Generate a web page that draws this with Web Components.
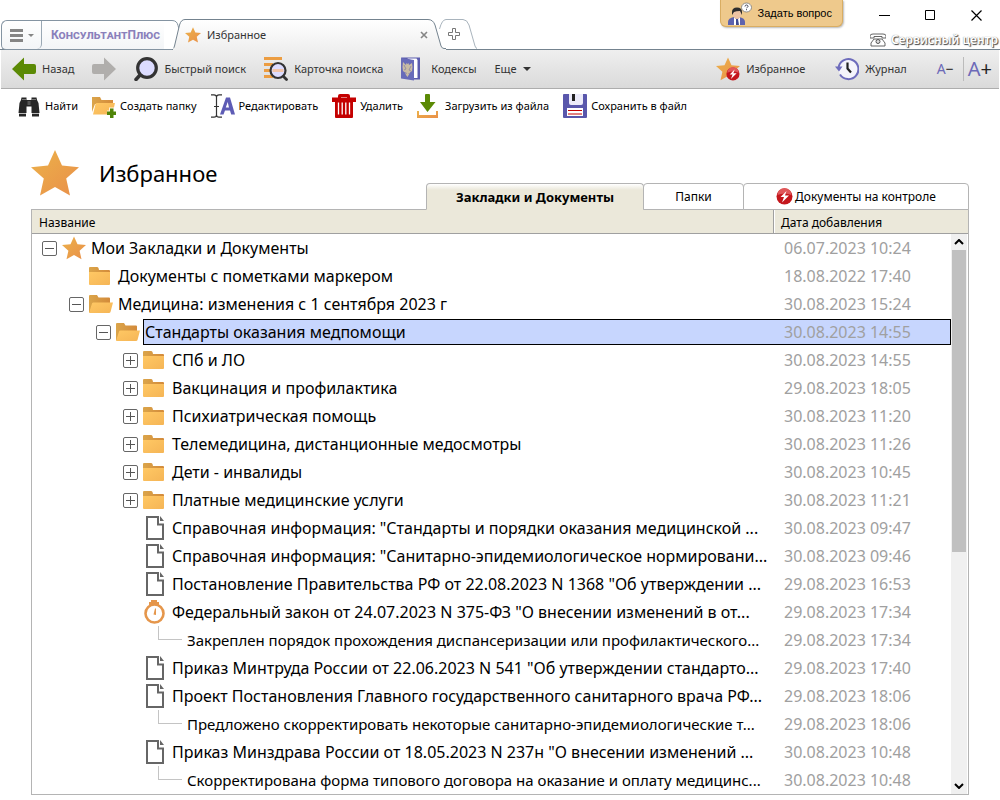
<!doctype html>
<html lang="ru">
<head>
  <meta charset="utf-8">
  <meta name="viewport" content="width=device-width, initial-scale=1.0">
  <title>КонсультантПлюс - Избранное</title>
  <style>
    body {
      margin: 0;
      background: #fff;
      color: #000;
      font: 12px/16px "Noto Sans", "Open Sans", sans-serif;
    }
  </style>

  <template id="tool-button">
    <style>
      :host { display: block; }
      button {
        display: flex;
        align-items: center;
        gap: var(--tool-gap, 6px);
        height: 28px;
        margin: 0;
        padding: 0;
        border: 0;
        background: none;
        color: inherit;
        font: inherit;
        font-size: 11px;
        white-space: nowrap;
      }
    </style>
    <button type="button"><slot name="icon"></slot><slot></slot></button>
  </template>

  <template id="window-tabs">
    <style>
      :host { display: flex; align-items: flex-end; height: 31px; margin-bottom: -1px; padding-left: 1px; }
      button { margin: 0; padding: 0; border: 0; background: none; font: inherit; color: inherit; }
      .start, .page { display: flex; align-items: center; height: 30px; box-sizing: border-box; }
      .start {
        border: 1px solid #8494a2;
        border-right: 0;
        border-radius: 6px 0 0 5px;
        background: linear-gradient(#fff, #f3f5f7);
      }
      .menu {
        display: flex;
        align-items: center;
        justify-content: center;
        gap: 5px;
        width: 40px;
        height: 28px;
        border-right: 1px solid #9aa8b4;
        border-radius: 0 0 5px 0;
      }
      .logo {
        padding: 0 0 0 9px;
        width: 122px;
        text-align: left;
        box-sizing: border-box;
        color: #8a80bb;
        font: bold 12px/28px Roboto, "Liberation Sans", sans-serif;
        font-variant: small-caps;
        white-space: nowrap;
      }
      svg { display: block; flex: none; }
      .page { align-self: flex-end; height: 31px; margin-left: -7px; }
      .mid {
        display: flex;
        align-items: center;
        gap: 6px;
        width: 243px;
        height: 31px;
        box-sizing: border-box;
        border-top: 1px solid #74838f;
        background: linear-gradient(#fff, #efefef);
      }
      .mid span { flex: 1; color: #333; font-size: 11px; }
      .edge-end { margin-right: -7px; }
    </style>
    <div class="start">
      <button class="menu" type="button" aria-label="Меню">
        <svg width="13" height="13" viewBox="0 0 13 13"><path d="M0 0h13v3H0zM0 5h13v3H0zM0 10h13v3H0z" fill="#858585"/></svg>
        <svg width="6" height="3" viewBox="0 0 6 3"><path d="M0 0h6L3 3z" fill="#858585"/></svg>
      </button>
      <button class="logo" type="button">КонсультантПлюс</button>
    </div>
    <svg width="16" height="30" viewBox="0 0 16 30" fill="none" stroke="#8494a2">
      <path d="M0 .5h8q5 0 6 5L16 12" fill="none"/><path d="M0 29.5h8"/>
    </svg>
    <div class="page">
      <svg width="12" height="31" viewBox="0 0 12 31">
        <linearGradient id="g" x2="0" y2="1"><stop stop-color="#fff"/><stop offset="1" stop-color="#efefef"/></linearGradient>
        <path d="M0 31v-1.500q1-.5 1.500-2.500L6.500 6Q8 .5 12 .5V31z" fill="url(#g)"/>
        <path d="M0 29.500q1-.5 1.500-2.500L6.500 6Q8 .5 12 .5" fill="none" stroke="#74838f"/>
      </svg>
      <div class="mid">
        <ui-icon name="star" style="--size:16px"></ui-icon>
        <span>Избранное</span>
        <button type="button" aria-label="Закрыть вкладку">
          <svg width="8" height="8" viewBox="0 0 8 8"><path d="M1 1l6 6M7 1L1 7" stroke="#858585" stroke-width="1.600"/></svg>
        </button>
      </div>
      <svg class="edge-end" width="18" height="31" viewBox="0 0 18 31">
        <linearGradient id="h" x2="0" y2="1"><stop stop-color="#fff"/><stop offset="1" stop-color="#efefef"/></linearGradient>
        <path d="M0 .5q5 0 7 5.500l6 21q1 2.500 3 2.500h2V31H0z" fill="url(#h)"/>
        <path d="M0 .5q5 0 7 5.500l6 21q1 2.500 3 2.500h2" fill="none" stroke="#74838f"/>
      </svg>
    </div>
    <button type="button" aria-label="Новая вкладка">
      <svg width="38" height="31" viewBox="0 0 38 31" fill="none" stroke="#a9b4bd">
        <path d="M.5 10Q3 .5 7 .5h17q4 0 6 5.500l6 21q1 2.500 2 2.500"/>
        <path d="M13.500 9.500h3v4h4v3h-4v4h-3v-4h-4v-3h4z" stroke="#777"/>
      </svg>
    </button>
  </template>

  <template id="title-bar">
    <style>
      :host {
        display: flex;
        justify-content: space-between;
        align-items: flex-end;
        height: 49px;
        border-bottom: 1px solid #74838f;
      }
      .side { display: flex; flex-direction: column; align-items: flex-end; height: 49px; }
      .top { display: flex; height: 30px; align-items: flex-start; }
      button { margin: 0; padding: 0; border: 0; background: none; font: inherit; color: inherit; }
      .ask {
        display: flex;
        align-items: center;
        gap: 6px;
        height: 27px;
        padding: 0 10px 0 7px;
        margin-right: 18px;
        border: 1px solid #d9ad62;
        border-top: 0;
        border-radius: 0 0 6px 6px;
        background: #eec98c;
        box-shadow: 1px 1px 2px #b9b9b9;
        white-space: nowrap;
        font: 11px/16px "Liberation Sans", sans-serif;
      }
      .controls { display: flex; margin-right: 1px; }
      .controls button { display: grid; place-items: center; width: 46px; height: 30px; }
      a {
        display: flex;
        align-items: center;
        gap: 5px;
        height: 19px;
        color: #fff;
        font: 600 12px/18px "Noto Sans", sans-serif;
        text-decoration: none;
        text-shadow: 1px 1px 1px #444, 0 0 1px #777;
        white-space: nowrap;
        padding-right: 2px;
      }
    </style>
    <window-tabs></window-tabs>
    <div class="side">
      <div class="top">
        <button class="ask" type="button"><ui-icon name="person"></ui-icon>Задать вопрос</button>
        <div class="controls">
          <button type="button" aria-label="Свернуть"><svg width="11" height="11"><path d="M0 5.500h11" stroke="#000"/></svg></button>
          <button type="button" aria-label="Развернуть"><svg width="11" height="11"><path d="M.5 .5h9v9h-9z" fill="none" stroke="#000"/></svg></button>
          <button type="button" aria-label="Закрыть"><svg width="11" height="11"><path d="M.5 .5l10 10M10.500 .5l-10 10" stroke="#000" stroke-width="1.200"/></svg></button>
        </div>
      </div>
      <a href="#service"><ui-icon name="phone" style="--size:16px"></ui-icon>Сервисный центр</a>
    </div>
  </template>

  <template id="nav-bar">
    <style>
      :host {
        display: flex;
        align-items: center;
        gap: 18px;
        height: 38px;
        padding: 0 7px 0 11px;
        margin: 0 1px;
        border-bottom: 1px solid #adadad;
        background: linear-gradient(#efefef, #dadada);
        color: #333;
      }
      .right { display: flex; align-items: center; gap: 30px; margin-left: auto; }
      .sizes { display: flex; align-items: center; }
      .sizes button { margin: 0; padding: 0 9px 0 0; border: 0; background: none; color: #222; font: 14px/24px "Noto Sans", sans-serif; }
      .sizes button + button { padding: 0 0 0 4px; border-left: 1px solid #bbb; font-size: 20px; }
      .sizes b { color: #6d6ab8; font-weight: normal; }
      .down { display: inline-block; margin-left: 6px; vertical-align: middle; }
    </style>
    <tool-button><ui-icon slot="icon" name="back"></ui-icon>Назад</tool-button>
    <tool-button style="--tool-gap:0px"><ui-icon slot="icon" name="forward"></ui-icon></tool-button>
    <tool-button><ui-icon slot="icon" name="search"></ui-icon>Быстрый поиск</tool-button>
    <tool-button><ui-icon slot="icon" name="card"></ui-icon>Карточка поиска</tool-button>
    <tool-button><ui-icon slot="icon" name="book"></ui-icon>Кодексы</tool-button>
    <tool-button style="--tool-gap:0px">Еще<svg class="down" width="8" height="4" viewBox="0 0 8 4"><path d="M0 0h8L4 4z" fill="#333"/></svg></tool-button>
    <div class="right">
      <tool-button><ui-icon slot="icon" name="star-control"></ui-icon>Избранное</tool-button>
      <tool-button><ui-icon slot="icon" name="journal"></ui-icon>Журнал</tool-button>
      <div class="sizes">
        <button type="button"><b>A</b>−</button>
        <button type="button"><b>A</b>+</button>
      </div>
    </div>
  </template>

  <template id="action-bar">
    <style>
      :host { display: flex; align-items: center; gap: 14px; height: 34px; padding-left: 17px; --tool-gap: 4px; }
    </style>
    <tool-button><ui-icon slot="icon" name="find"></ui-icon>Найти</tool-button>
    <tool-button><ui-icon slot="icon" name="folder-add"></ui-icon>Создать папку</tool-button>
    <tool-button><ui-icon slot="icon" name="edit"></ui-icon>Редактировать</tool-button>
    <tool-button><ui-icon slot="icon" name="trash"></ui-icon>Удалить</tool-button>
    <tool-button><ui-icon slot="icon" name="download"></ui-icon>Загрузить из файла</tool-button>
    <tool-button><ui-icon slot="icon" name="save"></ui-icon>Сохранить в файл</tool-button>
  </template>

  <template id="page-heading">
    <style>
      :host { display: flex; justify-content: space-between; align-items: flex-end; margin: 0 31px; height: 86px; }
      h1 { display: flex; align-items: center; gap: 20px; align-self: flex-start; margin: 24px 0 0; font: 22px/52px "Noto Sans", sans-serif; }
    </style>
    <h1><ui-icon name="star" style="--size:48px"></ui-icon><slot></slot></h1>
    <slot name="tabs"></slot>
  </template>

  <template id="view-tabs">
    <style>
      :host { display: flex; margin-bottom: -1px; position: relative; }
      button {
        display: flex;
        align-items: center;
        justify-content: center;
        gap: 2px;
        width: 101px;
        height: 27px;
        margin: 0 0 0 -1px;
        padding: 0;
        border: 1px solid #b4b4b4;
        border-radius: 4px 4px 0 0;
        background: #fff;
        color: #000;
        font: inherit;
        white-space: nowrap;
      }
      .active { width: 218px; border-bottom-color: #ebe8da; background: linear-gradient(#fff, #ebe8da 6px); font-weight: bold; font-size: 13px; }
      .control { width: 226px; }
    </style>
    <button class="active" type="button">Закладки и Документы</button>
    <button type="button">Папки</button>
    <button class="control" type="button"><ui-icon name="control" style="--size:17px"></ui-icon>Документы на контроле</button>
  </template>

  <template id="bookmark-tree">
    <style>
      :host { display: grid; margin: 0 31px; border: 1px solid #b4b4b4; }
      table {
        grid-area: 1 / 1;
        width: 100%;
        border-collapse: separate;
        border-spacing: 0;
        table-layout: fixed;
      }
      th {
        height: 24px;
        padding: 2px 7px 0;
        box-sizing: border-box;
        border-bottom: 1px solid #a0a0a0;
        background: #ebe8da;
        text-align: left;
        font-weight: normal;
        line-height: 21px;
      }
      th + th { width: 195px; border-left: 1px solid #a0a0a0; box-shadow: inset 1px 0 #fff; }
      td { height: 28px; padding: 0; font-size: 16px; line-height: 24px; white-space: nowrap; }
      .name { display: flex; align-items: center; height: 28px; padding-left: calc(10px + 27px * var(--level)); }
      .toggle {
        display: grid;
        place-items: center;
        flex: none;
        width: 15px;
        height: 15px;
        margin: 0 5px 0 0;
        padding: 0;
        border: 1px solid #666;
        border-radius: 2px;
        background: #fff;
      }
      .toggle.none { visibility: hidden; }
      .label {
        flex: 1;
        min-width: 0;
        height: 24px;
        margin-left: 3px;
        padding-left: 1px;
        border: 1px solid transparent;
        border-right: 0;
        overflow: hidden;
      }
      .date { color: #a0a0a0; }
      .date span { display: block; height: 24px; margin-right: 17px; padding-left: 11px; border: 1px solid transparent; border-left: 0; }
      .selected span { border-color: #000; background: #c7d6fe; }
      .note .name { padding-left: 126px; font-size: 15px; }
      .note .elbow { flex: none; width: 24px; height: 14px; margin-bottom: 14px; border: solid #c4c4c4; border-width: 0 0 1px 1px; box-sizing: border-box; }
      .scroll {
        grid-area: 1 / 1;
        z-index: 1;
        justify-self: end;
        display: flex;
        flex-direction: column;
        justify-content: space-between;
        width: 17px;
        margin-top: 24px;
        box-sizing: border-box;
        border-right: 1px solid #fff;
        background: #f0f0f0;
      }
      .scroll button { display: grid; place-items: center; width: 16px; height: 16px; padding: 0; border: 0; background: none; }
      .thumb { flex: 0 0 54%; margin: 0 1px; background: #c0c0c0; }
      .rest { flex: 1; }
    </style>
    <table>
      <thead><tr><th scope="col">Название</th><th scope="col">Дата добавления</th></tr></thead>
      <tbody></tbody>
    </table>
    <div class="scroll">
      <button type="button" aria-label="Вверх"><svg width="10" height="6"><path d="M1 5l4-4 4 4" fill="none" stroke="#000" stroke-width="2"/></svg></button>
      <div class="thumb"></div>
      <div class="rest"></div>
      <button type="button" aria-label="Вниз"><svg width="10" height="6"><path d="M1 1l4 4 4-4" fill="none" stroke="#000" stroke-width="2"/></svg></button>
    </div>
  </template>
</head>
<body>
<title-bar></title-bar>
<nav-bar></nav-bar>
<action-bar></action-bar>
<page-heading>Избранное<view-tabs slot="tabs"></view-tabs></page-heading>
<bookmark-tree></bookmark-tree>

<script>
  const ORANGE = '<linearGradient id="o" x2="1" y2="1"><stop stop-color="#ecb24a"/><stop offset="1" stop-color="#e98f49"/></linearGradient>';
  const FOLDER = '<linearGradient id="f" x2="1" y2="1"><stop stop-color="#ffc864"/><stop offset="1" stop-color="#f5b556"/></linearGradient>' +
    '<linearGradient id="d" x2="1" y2="0"><stop stop-color="#dba54a"/><stop offset="1" stop-color="#d38a3a"/></linearGradient>';
  const BOLT = '<circle cx="8.500" cy="8.500" r="8" fill="#c4161c"/><path d="M1.500 7a7 7 0 0 1 14 0q-7-3-14 0z" fill="#e0575a"/>' +
    '<path d="M10.500 3L4.500 9h3.500l-2 5.500L13 7.500H9z" fill="#fff"/>';

  // all glyphs are drawn on a 24x24 grid unless a viewBox is given
  const ICONS = {
    'star': ['0 0 24 24', ORANGE + '<path d="M12 .5l3.500 7.700 8.500.9-6.400 5.700 1.900 8.400L12 19l-7.500 4.200 1.900-8.400L0 9.100l8.500-.9z" fill="url(#o)"/>'],
    'star-control': ['0 0 24 24', ORANGE + '<path d="M12 .5l3.500 7.700 8.500.9-6.400 5.700 1.900 8.400L12 19l-7.500 4.200 1.900-8.400L0 9.100l8.500-.9z" fill="url(#o)"/><g transform="translate(10 10) scale(.82)">' + BOLT + '</g>'],
    'control': ['0 0 17 17', BOLT],
    'back': ['0 0 24 24', '<path d="M0 12L12 .5V7h10q2 0 2 2v6q0 2-2 2H12v6.500z" fill="#5b8a05"/>'],
    'forward': ['0 0 24 24', '<path d="M24 12L12 .5V7H2Q0 7 0 9v6q0 2 2 2h10v6.500z" fill="#b0aeac"/>'],
    'search': ['0 0 24 24', '<path d="M6.500 17.500L2 22.500" stroke="#333" stroke-width="3.500" stroke-linecap="round"/><circle cx="13" cy="11" r="9.300" fill="#dcdcff" stroke="#333" stroke-width="3.200"/>'],
    'card': ['0 0 24 24', '<path d="M0 0h18v3H0zM0 6h9v3H0zM0 12h7v3H0zM0 18h9v3H0z" fill="#ec9d42"/><circle cx="14" cy="13.500" r="7.500" fill="#dcdcff" stroke="#333" stroke-width="2.200"/><path d="M8.500 12h11v3h-11z" fill="#f2c5aa"/><path d="M19.500 19.500l3 3" stroke="#333" stroke-width="2.800" stroke-linecap="round"/>'],
    'book': ['3 0 24 24', '<path d="M3 .5h19v22h-8z" fill="#5b5cae"/><path d="M9 1.500h9.500L19.500 3v18h-4V4z" fill="#fff"/><path d="M3 1l13 2v20.500L3 21.500z" fill="#686bb9"/><path d="M8.500 6l1 1 1-1 .5 2 3-2 .5 4-.5 4-2 1.500-1 2-1.500 2.500L8 18l-1-2.500-2-1.500-.5-4L5 5l3 3z" fill="#c9bca5"/><path d="M6 8l2 4-2 1M13 9l-2 4 2 1M7.500 15l1 2M11.500 16l-1 1" stroke="#8a83a6" stroke-width=".8" fill="none"/>'],
    'journal': ['0 0 24 24', '<circle cx="13" cy="12" r="9.500" fill="#f5f4fb"/><path d="M5 17.500A10 10 0 1 0 3.500 11" fill="none" stroke="#6e6cbc" stroke-width="2"/><path d="M0 9.500h7.500L4 14.500z" fill="#6e6cbc"/><path d="M12.500 5.500v6l3.500 4" fill="none" stroke="#222" stroke-width="2.200"/>'],
    'find': ['0 0 24 24', '<path d="M4.500 3.500h5V6h5V3.500h5L20 6l1.500 3 1 10h-8v-6.500h-5V19h-8l1-10L4 6zM2 20h7v2.500H2zM15 20h7v2.500h-7z" fill="#262626"/><path d="M5 5.500h4M15 5.500h4M2 19.500h7M15 19.500h7" stroke="#999" stroke-width=".7"/><path d="M10.500 7h3v4h-3z" fill="#555"/>'],
    'folder-add': ['0 0 24 24', FOLDER + '<path d="M0 3h8l1.500 3H21v4H3L0 18z" fill="url(#d)"/><path d="M4.500 9H23l-2.500 10.500q-.3 1-1.500 1H1L3.500 10z" fill="url(#f)"/><path d="M17 13.500h5.500v3H24V24h-9v-7.500h2z" fill="#fff" opacity=".8"/><path d="M18 14.500h3.500v3H24V21h-2.500v3H18v-3h-3v-3.500h3z" fill="#4f8408"/>'],
    'edit': ['0 0 24 24', '<path d="M0 .8h3q2.500 0 2.500 2.200v18q0 2.200-2.500 2.200H0M11 .8H8Q5.500.8 5.500 3v18q0 2.200 2.500 2.200h3M3 12.500h5" fill="none" stroke="#333" stroke-width="1.200"/><path d="M9 20.500L15 3.500h4l5 17h-3.800l-1.200-4h-5l-1.500 4zM14.800 13.500H18L16.700 8z" fill="#5e5cb5" fill-rule="evenodd"/>'],
    'trash': ['0 0 24 24', '<path d="M6 3.500V2q0-2 2-2h8q2 0 2 2v1.500h6V8H0V3.500zM9 3.500h6V3H9zM3 8h18v15q0 1-1 1H4q-1 0-1-1z" fill="#c40000" fill-rule="evenodd"/><path d="M6.500 8.500v12M10.200 8.500v12M13.800 8.500v12M17.500 8.500v12" stroke="#fff" stroke-width="1.300"/>'],
    'download': ['0 0 24 24', ORANGE + '<path d="M0 17h2v4h17v-4h2v7H0z" fill="url(#o)"/><path d="M8 1q0-1 1-1h3q1 0 1 1v7h5.500l-8 10L3 8h5z" fill="#5b8a05"/>'],
    'save': ['0 0 24 24', '<path d="M0 1q0-1 1-1h22q1 0 1 1v22q0 1-1 1H1q-1 0-1-1z" fill="#5957ac"/><path d="M6 0h14v9q0 2-2 2H8q-2 0-2-2z" fill="#ecebfa"/><path d="M9 0h3v7H9z" fill="#222"/><path d="M4 14h16v8H4z" fill="#fff"/><path d="M5 16.500h14M5 20h14" stroke="#c40000"/>'],
    'person': ['0 0 24 24', '<path d="M0 24v-3q0-4 6-5h5q6 1 6 5v3z" fill="#5e63ae"/><path d="M6 16l3 3 3-3v8H6z" fill="#fff"/><path d="M8 18h2l1 6H8z" fill="#3f4b91"/><path d="M5 11q0-4 4-4t4 4v3q-1 4-4 4t-4-4z" fill="#efc4a3"/><path d="M4 14v-3q0-4.500 5-4.500t5 4.500v3l-2-4q-4 0-6 1z" fill="#2d2d2d"/><ellipse cx="18.500" cy="6.500" rx="5" ry="4.500" fill="#fff" stroke="#777" stroke-width=".8"/><path d="M17 5.500q0-1.500 1.500-1.500T20 5.500q-.5 1-1.500 1.500M18.500 8.200v1" fill="none" stroke="#445"/>'],
    'phone': ['0 0 16 16', '<path d="M0 4q0-2 3-2h10q3 0 3 2v2h-4V4.500H4V6H0zM4 7h8l3 4v3H1v-3z" fill="#fff" stroke="#555" stroke-width=".9"/><circle cx="8" cy="9.500" r="2" fill="#ddd" stroke="#555"/>'],
    'folder': ['0 0 24 24', FOLDER + '<path d="M0 4q0-1 1-1h7q1 0 1.500 1L10 6h10q1 0 1 1v3H0z" fill="url(#d)"/><path d="M0 8h21v12q0 1-1 1H1q-1 0-1-1z" fill="url(#f)"/>'],
    'folder-open': ['0 0 24 24', FOLDER + '<path d="M0 4q0-1 1-1h7l1.500 2.500H20q1 0 1 1V11H4L1 20H0z" fill="url(#d)"/><path d="M4.500 10.500H24L21.500 20q-.3 1-1.500 1H0L3 11.500q.3-1 1.500-1z" fill="url(#f)"/>'],
    'doc': ['0 0 24 24', '<path d="M15 1H4v22h16V8.500h-5z" fill="#fff" stroke="#666" stroke-width="2"/><path d="M17 0l4 5h-4z" fill="#666"/>'],
    'timer': ['0 0 24 24', '<path d="M8 0h6v2h2v3H6V2h2z" fill="#e5964b"/><circle cx="11.500" cy="13.500" r="9" fill="#fff" stroke="#e5964b" stroke-width="2.600"/><path d="M12 8.500h1v6.500l-2.500-.5z" fill="#e5964b"/>']
  };

  // base class: stamps the template that carries the tag's name
  class Stamped extends HTMLElement {
    constructor() {
      super();
      const t = document.getElementById(this.localName);
      this.attachShadow({mode: 'open'}).appendChild(t.content.cloneNode(true));
    }
  }

  customElements.define('ui-icon', class extends HTMLElement {
    constructor() {
      super();
      this.attachShadow({mode: 'open'});
    }
    connectedCallback() {
      const [box, body] = ICONS[this.getAttribute('name')];
      this.shadowRoot.innerHTML = `
        <style>
          :host { display: block; flex: none; width: var(--size, 24px); height: var(--size, 24px); }
          svg { display: block; width: 100%; height: 100%; }
        </style>
        <svg viewBox="${box}" aria-hidden="true">${body}</svg>`;
    }
  });

  customElements.define('tool-button', class extends Stamped {});
  customElements.define('window-tabs', class extends Stamped {});
  customElements.define('title-bar', class extends Stamped {});
  customElements.define('nav-bar', class extends Stamped {});
  customElements.define('action-bar', class extends Stamped {});
  customElements.define('page-heading', class extends Stamped {});
  customElements.define('view-tabs', class extends Stamped {});

  // level, toggle sign, icon, title, date
  const ROWS = [
    [0, '-', 'star', 'Мои Закладки и Документы', '06.07.2023 10:24'],
    [1, '', 'folder', 'Документы с пометками маркером', '18.08.2022 17:40'],
    [1, '-', 'folder-open', 'Медицина: изменения с 1 сентября 2023 г', '30.08.2023 15:24'],
    [2, '-', 'folder-open', 'Стандарты оказания медпомощи', '30.08.2023 14:55', 'selected'],
    [3, '+', 'folder', 'СПб и ЛО', '30.08.2023 14:55'],
    [3, '+', 'folder', 'Вакцинация и профилактика', '29.08.2023 18:05'],
    [3, '+', 'folder', 'Психиатрическая помощь', '30.08.2023 11:20'],
    [3, '+', 'folder', 'Телемедицина, дистанционные медосмотры', '30.08.2023 11:26'],
    [3, '+', 'folder', 'Дети - инвалиды', '30.08.2023 10:45'],
    [3, '+', 'folder', 'Платные медицинские услуги', '30.08.2023 11:21'],
    [3, '', 'doc', 'Справочная информация: "Стандарты и порядки оказания медицинской ...', '30.08.2023 09:47'],
    [3, '', 'doc', 'Справочная информация: "Санитарно-эпидемиологическое нормировани...', '30.08.2023 09:46'],
    [3, '', 'doc', 'Постановление Правительства РФ от 22.08.2023 N 1368 "Об утверждении ...', '29.08.2023 16:53'],
    [3, '', 'timer', 'Федеральный закон от 24.07.2023 N 375-ФЗ "О внесении изменений в от...', '29.08.2023 17:34'],
    [3, '', '', 'Закреплен порядок прохождения диспансеризации или профилактического...', '29.08.2023 17:34', 'note'],
    [3, '', 'doc', 'Приказ Минтруда России от 22.06.2023 N 541 "Об утверждении стандарто...', '29.08.2023 17:40'],
    [3, '', 'doc', 'Проект Постановления Главного государственного санитарного врача РФ...', '29.08.2023 18:06'],
    [3, '', '', 'Предложено скорректировать некоторые санитарно-эпидемиологические т...', '29.08.2023 18:06', 'note'],
    [3, '', 'doc', 'Приказ Минздрава России от 18.05.2023 N 237н "О внесении изменений ...', '30.08.2023 10:48'],
    [3, '', '', 'Скорректирована форма типового договора на оказание и оплату медицинс...', '30.08.2023 10:48', 'note']
  ];

  customElements.define('bookmark-tree', class extends Stamped {
    connectedCallback() {
      this.shadowRoot.querySelector('tbody').innerHTML = ROWS.map(([level, sign, icon, title, date, kind = '']) => {
        const toggle = `<button type="button" class="toggle ${sign ? '' : 'none'}" aria-label="${sign === '+' ? 'Развернуть' : 'Свернуть'}">
          <svg width="9" height="9"><path d="M0 4.500h9${sign === '+' ? 'M4.500 0v9' : ''}" stroke="#555"/></svg></button>`;
        const lead = kind === 'note' ? '<i class="elbow"></i>' : `${toggle}<ui-icon name="${icon}"></ui-icon>`;
        return `<tr class="${kind}">
          <td><div class="name" style="--level:${level}">${lead}<span class="label">${title}</span></div></td>
          <td class="date"><span>${date}</span></td></tr>`;
      }).join('');
    }
  });
</script>
</body>
</html>
